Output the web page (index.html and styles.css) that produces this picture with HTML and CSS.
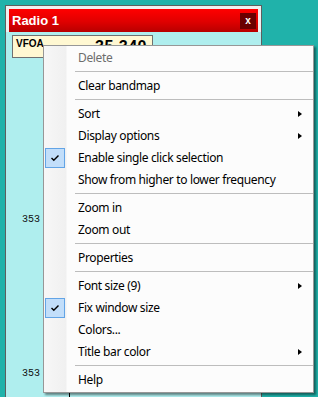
FILE: index.html
```html
<!DOCTYPE html>
<html>
<head>
<meta charset="utf-8">
<link rel="stylesheet" href="styles.css">
</head>
<body>
<div class="window">
  <div class="titlebar">
    <span class="title">Radio 1</span>
    <span class="close">x</span>
  </div>
  <div class="content">
    <div class="vfo">
      <span class="vfo-label">VFOA</span>
      <span class="vfo-freq">35,340</span>
    </div>
    <div class="bandmap">
      <div class="scale">
        <div class="mark mark-1">353</div>
        <div class="mark mark-2">353</div>
      </div>
      <div class="spots"></div>
    </div>
  </div>
</div>

<div class="menu">
  <div class="item disabled">Delete</div>
  <div class="sep"></div>
  <div class="item">Clear bandmap</div>
  <div class="sep"></div>
  <div class="item sub">Sort</div>
  <div class="item sub">Display options</div>
  <div class="item checked">Enable single click selection</div>
  <div class="item">Show from higher to lower frequency</div>
  <div class="sep"></div>
  <div class="item">Zoom in</div>
  <div class="item">Zoom out</div>
  <div class="sep"></div>
  <div class="item">Properties</div>
  <div class="sep"></div>
  <div class="item sub">Font size (9)</div>
  <div class="item checked">Fix window size</div>
  <div class="item">Colors...</div>
  <div class="item sub">Title bar color</div>
  <div class="sep"></div>
  <div class="item">Help</div>
</div>
</body>
</html>
```

FILE: styles.css
```css
html, body {
  margin: 0;
  padding: 0;
}
body {
  width: 318px;
  height: 397px;
  overflow: hidden;
  background: #20b2aa;
  position: relative;
  padding: 5px 0 0 5px;
  box-sizing: border-box;
  font-family: "Noto Sans", "Open Sans", sans-serif;
}
.window {
  width: 257px;
  height: 392px;
  box-sizing: border-box;
  border: 1px solid #5e5e5e;
  border-bottom: none;
  background: #f0f0f0;
  display: flex;
  flex-direction: column;
}
.titlebar {
  margin: 3px 3px 0 3px;
  height: 23px;
  background: linear-gradient(to bottom, #ff0000 0%, #e00000 55%, #b80000 100%);
  display: flex;
  align-items: center;
  justify-content: space-between;
  padding: 0 2px 0 3px;
}
.title {
  color: #fff;
  font-family: "Liberation Sans", Arial, sans-serif;
  font-weight: bold;
  font-size: 13px;
}
.close {
  width: 16px;
  height: 16px;
  background: #6a0000;
  color: #fff;
  font-family: "Liberation Sans", Arial, sans-serif;
  font-weight: bold;
  font-size: 10px;
  line-height: 15px;
  text-align: center;
}
.content {
  flex: 1;
  background: #afeeee;
  display: flex;
  flex-direction: column;
  padding: 3px 0 0 6px;
}
.vfo {
  width: 141px;
  height: 23px;
  box-sizing: border-box;
  border: 1px solid #707070;
  background: #fff8d2;
  display: flex;
  justify-content: space-between;
  align-items: flex-start;
  padding: 0 5px 0 3px;
}
.vfo-label {
  font-family: "Liberation Sans", Arial, sans-serif;
  font-weight: bold;
  font-size: 10px;
  line-height: 12px;
  margin-top: 2px;
}
.vfo-freq {
  font-family: "Liberation Sans", Arial, sans-serif;
  font-weight: bold;
  font-size: 16px;
  line-height: 16px;
  margin-top: 3px;
  letter-spacing: 0.5px;
}
.bandmap {
  flex: 1;
  display: flex;
}
.scale {
  width: 57px;
  border-right: 1px solid #000;
  display: flex;
  flex-direction: column;
  align-items: flex-start;
}
.mark {
  font-family: "Liberation Mono", monospace;
  font-size: 10px;
  line-height: 12px;
  color: #111;
  padding-left: 10px;
}
.mark-1 {
  margin-top: 156px;
}
.mark-2 {
  margin-top: 142px;
}
.menu {
  position: absolute;
  left: 43px;
  top: 45px;
  width: 271px;
  box-sizing: border-box;
  border: 1px solid #979797;
  padding: 1px 0 1px 0;
  background: linear-gradient(to right, #f7f7f7 0, #f0f0f0 22px, #fcfcfc 23px, #fcfcfc 100%);
  box-shadow: 2px 2px 2px rgba(0, 0, 0, 0.45);
  font-size: 12px;
  letter-spacing: -0.35px;
  color: #000;
}
.item {
  height: 22px;
  line-height: 22px;
  padding-left: 34px;
  position: relative;
  white-space: nowrap;
}
.item.disabled {
  color: #6d6d6d;
}
.item.sub::after {
  content: "";
  position: absolute;
  left: 254px;
  top: 8px;
  border-left: 4px solid #000;
  border-top: 3.5px solid transparent;
  border-bottom: 3.5px solid transparent;
}
.item.checked::before {
  content: "";
  position: absolute;
  left: 1px;
  top: 1px;
  width: 20px;
  height: 20px;
  box-sizing: border-box;
  border: 1px solid #62a4e6;
  background: #c2defa url("data:image/svg+xml;utf8,<svg xmlns='http://www.w3.org/2000/svg' width='20' height='20'><path d='M6.5 10 L8.8 12.3 L13.5 7.5' fill='none' stroke='black' stroke-width='1.4'/></svg>") no-repeat center;
}
.sep {
  height: 6px;
  margin-left: 31px;
  position: relative;
}
.sep::after {
  content: "";
  position: absolute;
  left: 0;
  right: 0;
  top: 2px;
  height: 1px;
  background: #bdbdbd;
}
```
